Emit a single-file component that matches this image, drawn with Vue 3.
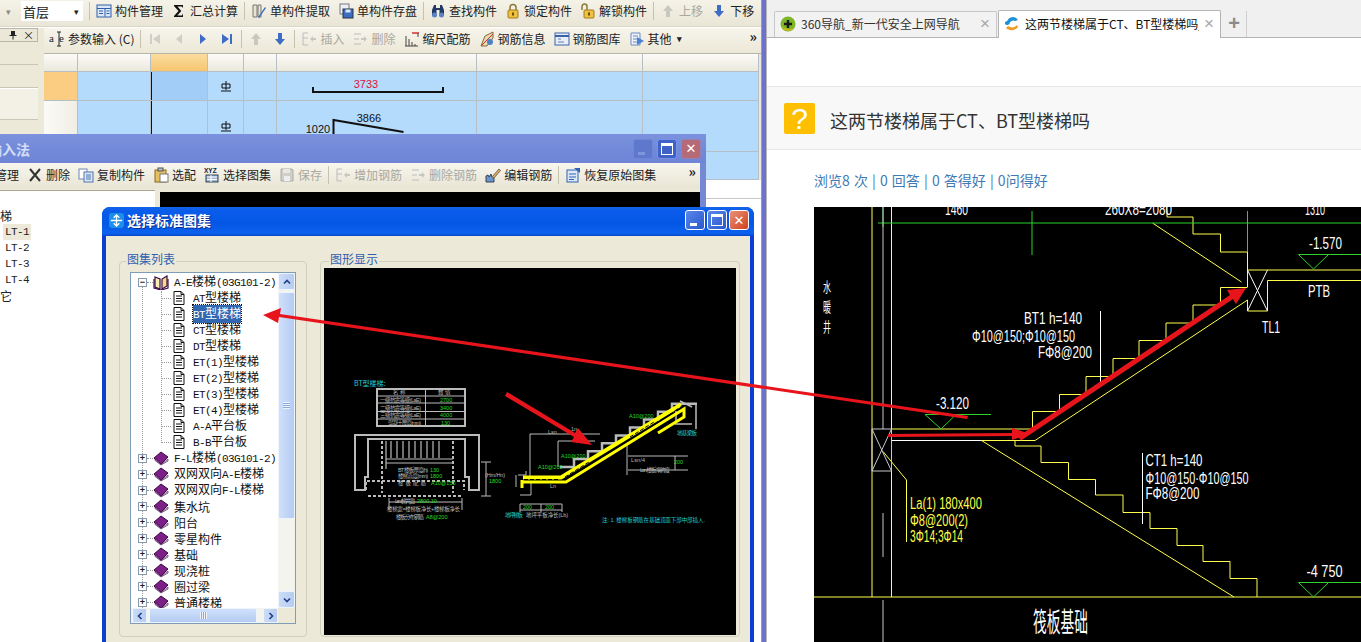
<template>
  <div class="screen">
    <!-- drawing software on the left half -->
    <div class="app">
      <div class="bar-main">
        <span class="tb-tail">▾</span>
        <div class="floor"><span>首层</span><i>▾</i></div>
        <span class="sep"></span>
        <template v-for="(t, i) in mainTools" :key="i">
          <span v-if="t.sep" class="sep"></span>
          <span v-else class="tool" :class="{ off: t.off }"><svg viewBox="0 0 16 16" width="16" height="16" v-html="icons[t.icon]"></svg>{{ t.label }}</span>
        </template>
      </div>

      <div class="app-body">
        <div class="dock">
          <div class="dock-head">
            <svg viewBox="0 0 10 10" width="10" height="10"><path d="M3 1h4v4h1.500v1h-3v3.500h-1V6h-3V5H3z" fill="#222"/></svg>
            <span>×</span>
          </div>
          <div class="dock-row"></div>
          <div class="dock-row"></div>
          <div class="dock-row last"></div>
        </div>
        <div class="sheet">
          <div class="bar-sub">
            <template v-for="(t, i) in subTools" :key="i">
              <span v-if="t.sep" class="sep"></span>
              <span v-else class="tool" :class="{ off: t.off }"><svg viewBox="0 0 16 16" width="16" height="16" v-html="icons[t.icon]"></svg>{{ t.label }}<b v-if="t.caret" class="caret">▾</b></span>
            </template>
            <span class="more">»</span>
          </div>
          <div class="grid">
            <div v-for="n in 8" :key="'h' + n" class="cell head" :class="{ hot: n === 3 }"></div>

            <div class="cell rowhead hot"></div>
            <div class="cell blue"></div>
            <div class="cell blue sel cursor"></div>
            <div class="cell blue mark"><svg viewBox="0 0 12 12" width="12" height="12" v-html="icons.grade"></svg></div>
            <div class="cell blue"></div>
            <div class="cell blue shape">
              <svg width="200" height="29" viewBox="277 72 200 29">
                <text x="366" y="88" class="num red">3733</text>
                <path d="M313 87v5h130v-5" fill="none" stroke="#111" stroke-width="2" />
              </svg>
            </div>
            <div class="cell blue"></div>
            <div class="cell blue"></div>

            <div class="cell rowhead"></div>
            <div class="cell blue"></div>
            <div class="cell blue cursor"></div>
            <div class="cell blue mark"><svg viewBox="0 0 12 12" width="12" height="12" v-html="icons.grade"></svg></div>
            <div class="cell blue"></div>
            <div class="cell blue shape">
              <svg width="200" height="50" viewBox="277 101 200 50">
                <text x="369" y="122" class="num">3866</text>
                <text x="318" y="133" class="num">1020</text>
                <path d="M333.500 134v-14l70 12" fill="none" stroke="#111" stroke-width="2" />
              </svg>
            </div>
            <div class="cell blue"></div>
            <div class="cell blue"></div>

            <div class="cell rowhead"></div>
            <div v-for="n in 7" :key="'r' + n" class="cell blue"></div>
          </div>
        </div>
      </div>

      <!-- inactive window behind -->
      <div class="win win-back">
        <div class="caption">
          <span class="cap-title">输入法</span>
          <div class="cap-btns">
            <span class="cap-btn dim"><u></u></span>
            <span class="cap-btn"><em></em></span>
            <span class="cap-btn close dull">✕</span>
          </div>
        </div>
        <div class="win-inner">
          <div class="bar-win">
            <template v-for="(t, i) in winTools" :key="i">
              <span v-if="t.sep" class="sep"></span>
              <span v-else class="tool" :class="{ off: t.off }"><svg v-if="t.icon" viewBox="0 0 16 16" width="16" height="16" v-html="icons[t.icon]"></svg>{{ t.label }}</span>
            </template>
            <span class="more">»</span>
          </div>
          <div class="win-main">
            <div class="back-tree">
              <div class="back-line">梯</div>
              <div class="back-line lt picked">LT-1</div>
              <div class="back-line lt">LT-2</div>
              <div class="back-line lt">LT-3</div>
              <div class="back-line lt">LT-4</div>
              <div class="back-line">它</div>
            </div>
            <div class="back-view"></div>
          </div>
        </div>
      </div>

      <!-- active dialog -->
      <div class="win win-front">
        <div class="caption">
          <span class="cap-icon"><svg viewBox="0 0 16 16" width="15" height="15"><path d="M8 2v12M2 8h12M5 5l3-3 3 3M5 11l3 3 3-3" fill="none" stroke="#fff" stroke-width="1.500"/></svg></span>
          <span class="cap-title">选择标准图集</span>
          <div class="cap-btns">
            <span class="cap-btn"><u></u></span>
            <span class="cap-btn"><em></em></span>
            <span class="cap-btn close">✕</span>
          </div>
        </div>
        <div class="dlg-body">
          <fieldset class="group tree-group">
            <span class="legend">图集列表</span>
            <div class="listbox">
              <div class="list-top">
                <div class="tree">
                  <span class="guide guide-root"></span>
                  <span class="guide guide-leaf"></span>
                  <div v-for="(r, i) in treeRows" :key="i" class="row" :class="r.type">
                    <template v-if="r.type !== 'leaf'">
                      <span class="expander">{{ r.type === 'open' ? '−' : '+' }}</span>
                      <span class="dots"></span>
                      <svg viewBox="0 0 16 16" width="16" height="16" v-html="r.type === 'open' ? icons.bookOpen : icons.book"></svg>
                    </template>
                    <template v-else>
                      <span class="dots leafdots"></span>
                      <svg viewBox="0 0 16 16" width="16" height="16" v-html="icons.doc"></svg>
                    </template>
                    <span class="name" :class="{ chosen: r.chosen }"><span v-for="(p, j) in splitRuns(r.label)" :key="j" :class="{ latin: p.latin }">{{ p.text }}</span></span>
                  </div>
                </div>
                <div class="vscroll">
                  <span class="sb-btn"><svg viewBox="0 0 10 10" width="10" height="10"><path d="M2 6.500l3-3 3 3" class="chev"/></svg></span>
                  <span class="sb-thumb"><i></i></span>
                  <span class="sb-btn low"><svg viewBox="0 0 10 10" width="10" height="10"><path d="M2 3.500l3 3 3-3" class="chev"/></svg></span>
                </div>
              </div>
              <div class="hscroll">
                <span class="sb-btn"><svg viewBox="0 0 10 10" width="10" height="10"><path d="M6.500 2l-3 3 3 3" class="chev"/></svg></span>
                <span class="sb-thumb"><i></i></span>
                <span class="sb-btn"><svg viewBox="0 0 10 10" width="10" height="10"><path d="M3.500 2l3 3-3 3" class="chev"/></svg></span>
                <span class="sb-end"></span>
              </div>
            </div>
          </fieldset>

          <fieldset class="group view-group">
            <span class="legend">图形显示</span>
            <svg class="preview" viewBox="324 268 412 367" width="412" height="367">
              <rect x="324" y="268" width="412" height="367" fill="#000" />
              <text x="354" y="386" class="t7 cy">BT型楼梯:</text>
              <g fill="none" stroke="#bbb">
                <rect x="377" y="389" width="88" height="37" stroke-width="2" />
                <path d="M378 396h86M378 403h86M378 411.500h86M378 419h86M425.500 389v37" />
                <path d="M355 490v-55h124v55h-10v-13h-4v-38h-97v38h-3v13z" stroke-width="2" />
                <path d="M366 490v-9h98v9M368 496h93M382 441v52M453 441v52" stroke-dasharray="3 2" stroke-width="2" />
                <path d="M386 441v28M391 441v17M397 441v17M403 441v17M409 441v17M415 441v17M421 441v17M427 441v17M433 441v17M439 441v17M386 459h67M386 463h67" stroke-width="1.200" />
                <path d="M486 462v34M481 462h10M481 496h10M389 502h73M389 498v12M462 498v12" />
                <path :d="stairPreview" stroke-width="2.500" />
                <path d="M518 475h8v-4M516 475v12M520 495h11v-14M530 434h70M530 434v44M558 441h37M558 441v26" stroke-width="1" />
                <path d="M628 456h60M628 470h60M627 445v30M675 456v14" />
                <path d="M696 405v24M692 424h-17M676 421v-10M680 401l12 6" stroke-width="1.500" />
                <path d="M520 504h42M520 510h42M520 504v8M541 504v8M562 504v8" />
              </g>
              <g fill="none" stroke="#ff0">
                <path d="M523 477.500h38l120-73" stroke-width="4" />
                <path d="M522 482h44l118-73v8l-26 16" stroke-width="3" />
                <path d="M522 480v8" stroke-width="3" />
              </g>
              <path d="M524 479.500h36M565 477l24-15M630 437l24-15M660 421l22-15" fill="none" stroke="#000" stroke-dasharray="4 2" />
              <g class="t6 gy">
                <text x="393" y="394">名 称</text><text x="438" y="394">数 值</text>
                <text x="380" y="402" textLength="41">一级抗震等级(LaE)</text>
                <text x="380" y="410" textLength="41">二级抗震等级(LaE)</text>
                <text x="380" y="417" textLength="41">三级抗震等级(LaE)</text>
                <text x="388" y="425" textLength="33">混凝土厚度(mm)</text>
                <text x="398" y="472" textLength="30">BT 楼板厚度(h)</text>
                <text x="398" y="478" textLength="30">楼梯高度(mm)</text>
                <text x="398" y="485" textLength="28">楼板配筋</text>
                <text x="395" y="503" textLength="20">Lsm(梯井宽)</text>
                <text x="387" y="511" textLength="73">楼梯宽=楼梯板净长+楼梯板净长</text>
                <text x="396" y="519" textLength="28">楼板分布钢筋</text>
                <text x="485" y="477" textLength="20">(Hm/Hn)</text>
                <text x="631" y="462" textLength="14">Lsn/4</text>
                <text x="640" y="472" textLength="30">Lsn:楼板净跨度</text>
                <text x="526" y="517" textLength="42">地坪平板净长(Lb)</text>
                <text x="571" y="431">1n</text>
                <text x="548" y="434">Lsn</text>
                <text x="550" y="488">Ln</text>
              </g>
              <g class="t6 gr">
                <text x="440" y="402">2700</text><text x="440" y="410">3400</text><text x="440" y="417">4000</text>
                <text x="441" y="425">130</text>
                <text x="430" y="472">130</text><text x="430" y="478">1800</text><text x="431" y="485">A10@150</text>
                <text x="489" y="483">1800</text>
                <text x="417" y="503">2800 10</text>
                <text x="426" y="519">A8@200</text>
                <text x="538" y="469">A10@200</text>
                <text x="561" y="458">A10@200</text>
                <text x="629" y="418">A10@200</text>
                <text x="523" y="509">200</text><text x="545" y="509">200</text>
                <text x="674" y="464">200</text>
              </g>
              <g class="t6 cy">
                <text x="677" y="435" textLength="20">地基梁板</text>
                <text x="505" y="517" textLength="18">地坪梯板</text>
                <text x="602" y="522" textLength="103">注: 1. 楼梯板钢筋在基础顶面下部中部插入.</text>
              </g>
            </svg>
          </fieldset>
        </div>
      </div>
    </div>

    <div class="divider"></div>

    <!-- browser on the right half -->
    <div class="browser">
      <div class="tabs">
        <div class="tab">
          <svg viewBox="0 0 16 16" width="16" height="16"><circle cx="8" cy="8" r="7.500" fill="#7cb526"/><path d="M2 10a7 7 0 0 0 12 2 9 9 0 0 1-12-2z" fill="#f2b705"/><path d="M8 4v8M4 8h8" stroke="#1a1a1a" stroke-width="2.400"/></svg>
          <span class="tab-title">360导航_新一代安全上网导航</span>
          <span class="tab-x">×</span>
        </div>
        <div class="tab active">
          <svg viewBox="0 0 16 16" width="16" height="16"><path d="M3 6a6 6 0 0 1 11-2l-3 1a3.500 3.500 0 0 0-5 1.500z" fill="#1f8fd8"/><path d="M1 8a2 2 0 0 1 5-1 3 3 0 0 1-5 1z" fill="#1f8fd8"/><path d="M2 12c3 3 9 3 12-1l-1-2c-2 3-6 3-9 1z" fill="#f29a1f"/></svg>
          <span class="tab-title">这两节楼梯属于CT、BT型楼梯吗_</span>
          <span class="tab-x">×</span>
        </div>
        <span class="tab-new">+</span>
      </div>
      <div class="page-gap"></div>
      <div class="q-band">
        <span class="q-mark">?</span>
        <span class="q-title">这两节楼梯属于CT、BT型楼梯吗</span>
      </div>
      <div class="q-stats">浏览8 次 | 0 回答 | 0 答得好 | 0问得好</div>
      <svg class="cad" viewBox="814 207 547 435" width="547" height="435">
        <rect x="814" y="207" width="547" height="435" fill="#000" />
        <g fill="none" stroke="#ffff4d">
          <path d="M872 207v390M891.500 207v390M814 597h547" />
          <path d="M1167 207v10h26v17h27.500v18h27v35" />
          <path d="M1152.500 223l89 59" />
          <path d="M1247.500 270h113.500M1267.500 280.500h93.500M1267.500 280.500v30.500h-20v-11" />
          <path d="M891.500 429h141v-17.500h27v-17h26.500v-18h27v-18h26v-18h27v-17.500h27v-18h27.500v-17.500h27" />
          <path d="M891.500 440.500h143.500l212.500-140.500" />
          <path d="M1015 440.500v5.500h26v16.500h27.500v17h27v15.500h27.500v17.500h27v16h27v17h26v16h27v17h27v18.500" />
          <path d="M981.500 440.500l252.500 156.500" />
          <path d="M883 451.500l23.500 28.500v62" />
        </g>
        <g fill="none" stroke="#2bd42b">
          <path d="M878 223h483M883 207v20M1032 211v44M1247.500 211v41" />
          <path d="M925 414.500h66M925 414.500l16 14.500 15-14.500" />
          <path d="M1298.500 254.500h62.500M1298.500 254.500l15 14.500 15-14.500" />
          <path d="M1298.500 582.500h62.500M1298.500 582.500l15 14.500 15-14.500" />
        </g>
        <g fill="none" stroke="#c8c8c8">
          <path d="M883 207v222M883 513v44M883 600v42" />
          <path d="M872 429h19.500v42h-19.500zM872 429l19.500 42M891.500 429l-19.500 42" />
        </g>
        <g fill="none" stroke="#fff">
          <path d="M1247.500 270l20 41M1267.500 270l-20 41" />
          <path d="M1100.500 311v71M1142.500 453v71M891.500 440.500h90" />
        </g>
        <g class="cad-text white">
          <text x="1024" y="324" textLength="58" lengthAdjust="spacingAndGlyphs">BT1 h=140</text>
          <text x="972" y="342" textLength="103" lengthAdjust="spacingAndGlyphs">Φ10@150;Φ10@150</text>
          <text x="1038" y="358" textLength="54" lengthAdjust="spacingAndGlyphs">FΦ8@200</text>
          <text x="1145.500" y="466" textLength="57" lengthAdjust="spacingAndGlyphs">CT1 h=140</text>
          <text x="1145.500" y="484" textLength="103" lengthAdjust="spacingAndGlyphs">Φ10@150·Φ10@150</text>
          <text x="1145.500" y="499" textLength="54" lengthAdjust="spacingAndGlyphs">FΦ8@200</text>
          <text x="936" y="409" textLength="33" lengthAdjust="spacingAndGlyphs">-3.120</text>
          <text x="1309" y="249" textLength="33" lengthAdjust="spacingAndGlyphs">-1.570</text>
          <text x="1306.500" y="577" textLength="36" lengthAdjust="spacingAndGlyphs">-4 750</text>
          <text x="1308" y="297" textLength="22" lengthAdjust="spacingAndGlyphs">PTB</text>
          <text x="1262" y="333" textLength="18" lengthAdjust="spacingAndGlyphs">TL1</text>
          <text x="945" y="215" textLength="23" lengthAdjust="spacingAndGlyphs">1460</text>
          <text x="1105" y="215" textLength="67" lengthAdjust="spacingAndGlyphs">260X8=2080</text>
          <text x="1305" y="215" textLength="20" lengthAdjust="spacingAndGlyphs">1310</text>
        </g>
        <g class="cad-text yellow">
          <text x="910" y="509" textLength="72" lengthAdjust="spacingAndGlyphs">La(1) 180x400</text>
          <text x="910" y="526" textLength="58" lengthAdjust="spacingAndGlyphs">Φ8@200(2)</text>
          <text x="910" y="542" textLength="53" lengthAdjust="spacingAndGlyphs">3Φ14;3Φ14</text>
        </g>
        <g class="cad-cn">
          <text x="823" y="292" textLength="8" lengthAdjust="spacingAndGlyphs">水</text>
          <text x="823" y="312" textLength="8" lengthAdjust="spacingAndGlyphs">暖</text>
          <text x="823" y="332" textLength="8" lengthAdjust="spacingAndGlyphs">井</text>
          <text class="big" x="1033" y="632" textLength="55" lengthAdjust="spacingAndGlyphs">筏板基础</text>
        </g>
      </svg>
    </div>

    <!-- annotation arrows across both windows -->
    <svg class="arrows" viewBox="0 0 1361 642" width="1361" height="642">
      <g fill="#e8141c" stroke="none">
        <path d="M263 315l18-7-1 6 688 102-1 3-688-102-1 6z" />
        <path d="M888 434l124-1v-5l18 6-18 6v-4l-124 1z" />
        <path d="M1018 436.500l212-141.500-3-5 19-2-10 16-3-5-212 141.500z" />
        <path d="M505 396l2-4 68 41 3-5 14 17-21-3 3-5z" />
      </g>
    </svg>
  </div>
</template>

<script setup>
const icons = {
  grid: '<rect x="1" y="2" width="14" height="12" fill="#dbe8f8" stroke="#2f5fa8"/><path d="M1 5.500h14M9 5.500v8M3 8h4M3 10.500h4M10.500 8h3M10.500 10.500h3" stroke="#2f5fa8"/>',
  sigma: '<path d="M3 2h9v3l-1.200-1.500H6.500l3.800 4.500-4 4.500h4.700l1-2v3.500H3v-1l4.500-5L3 3z" fill="#111"/>',
  extract: '<path d="M2 2h4v12H2zM7 2h3v12H7z" fill="#e8e4d0" stroke="#777"/><path d="M7 14l7-10 1 1-7 10z" fill="#3a6fc0"/>',
  disk: '<rect x="2" y="1" width="9" height="10" fill="#eef0f4" stroke="#778"/><rect x="5" y="6" width="10" height="9" fill="#3d6cc0" stroke="#234"/><rect x="7.500" y="6.500" width="5" height="3" fill="#dfe8f8"/>',
  find: '<path d="M2 7l2-5h2v3h4V2h2l2 5v6H9.500V7h-3v6H2z" fill="#223a66"/><circle cx="4.500" cy="12" r="2.500" fill="#5b83c4"/><circle cx="11.500" cy="12" r="2.500" fill="#5b83c4"/>',
  lock: '<path d="M5 7V4.500a3 3 0 0 1 6 0V7" fill="none" stroke="#8a7a3a" stroke-width="1.500"/><rect x="3" y="7" width="10" height="8" rx="1" fill="#f0c040" stroke="#a07a18"/><rect x="7" y="9.500" width="2" height="3" fill="#6b4d05"/>',
  unlock: '<path d="M2 7V3.500a2.500 2.500 0 0 1 5 0V7" fill="none" stroke="#8a7a3a" stroke-width="1.500"/><rect x="4" y="7" width="10" height="8" rx="1" fill="#f0c040" stroke="#a07a18"/><rect x="8" y="9.500" width="2" height="3" fill="#6b4d05"/>',
  up: '<path d="M8 2l5 6h-3v6H6V8H3z" fill="#c8c8c0"/>',
  down: '<path d="M8 14l5-6h-3V2H6v6H3z" fill="#3f6dc4"/>',
  text: '<path d="M8 1h4M10 1v14M8 15h4" stroke="#222" fill="none"/><text x="0" y="11" font-size="11" font-family="Liberation Serif" fill="#222">a</text><text x="10" y="11" font-size="11" font-family="Liberation Serif" fill="#222">e</text>',
  first: '<path d="M3 3h2v10H3zM13 3v10L6 8z" fill="#cfcfc8"/>',
  prev: '<path d="M11 3v10L5 8z" fill="#cfcfc8"/>',
  next: '<path d="M5 3v10l6-5z" fill="#3f6dc4"/>',
  last: '<path d="M3 3v10l7-5zM11 3h2v10h-2z" fill="#3f6dc4"/>',
  insert: '<path d="M2 2h5M2 2v12M2 14h5M2 7h5" stroke="#bbb" fill="none"/><path d="M9 8l3-3v2h3v2h-3v2z" fill="#c8c8c0"/>',
  remove: '<path d="M2 3h7M2 8h5M2 13h7" stroke="#bbb" fill="none"/><path d="M15 8l-3-3v2H9v2h3v2z" fill="#c8c8c0"/>',
  scale: '<path d="M2 15V5M5 15V8M8 15v-4M11 15v-2M14 15h-13" stroke="#444" fill="none"/><path d="M8 2h7" stroke="#c33" stroke-width="1.500"/><path d="M14 2v4" stroke="#444"/>',
  info: '<path d="M2 15l4-10 8-4v6l-6 8z" fill="#e8d9b0" stroke="#8a6a3a"/><path d="M2 15l12-12" stroke="#c33"/><circle cx="11" cy="11" r="3" fill="#4a83c8"/>',
  library: '<rect x="1" y="2" width="14" height="12" fill="#e9eef8" stroke="#3a62a8"/><path d="M1 5h14" stroke="#3a62a8" stroke-width="2"/><path d="M4 8h3M4 11h6" stroke="#6080b0"/>',
  other: '<path d="M2 2h9v12H2z" fill="#eef2fb" stroke="#6c8ac0"/><path d="M4 5h5M4 8h4M4 11h4" stroke="#6c8ac0"/><path d="M8 6l7 4-7 4z" fill="#4d82d2"/>',
  cross: '<path d="M3 2l10 12M13 2L3 14" stroke="#333" stroke-width="2"/>',
  copy: '<rect x="1" y="2" width="8" height="10" fill="#fff" stroke="#6c87b8"/><rect x="6" y="5" width="9" height="10" fill="#dce7f8" stroke="#4f74b0"/><path d="M8 8h5M8 10h5M8 12h5" stroke="#4f74b0"/>',
  match: '<rect x="2" y="3" width="11" height="12" fill="#e5c060" stroke="#8a6a20"/><rect x="5" y="1" width="5" height="3" fill="#bbb" stroke="#555"/><rect x="7" y="7" width="8" height="8" fill="#fff" stroke="#777"/>',
  atlas: '<text x="0" y="6" font-size="6.500" font-family="Liberation Sans" font-weight="700" fill="#124">XYZ</text><rect x="2" y="8" width="12" height="7" fill="#9fb4d4" stroke="#345"/><path d="M3 10h10M3 12.500h10M7 8v7" stroke="#fff"/>',
  save: '<path d="M2 2h11l1 1v11H2z" fill="#cfcfc8" stroke="#aaa"/><rect x="5" y="9" width="6" height="5" fill="#eee"/><rect x="4" y="2" width="7" height="4" fill="#e8e8e0"/>',
  edit: '<path d="M1 15V9l2-1 1 2 2-3 1 3 2-2v7z" fill="#6c93cc" stroke="#345"/><path d="M7 10L14 2l1.500 1.500L9 11z" fill="#e0b060" stroke="#765"/>',
  restore: '<rect x="2" y="3" width="11" height="12" fill="#dce7f8" stroke="#2f62b0"/><path d="M4 7h7M4 10h7M4 12.500h5" stroke="#2f62b0"/><path d="M9 1h6v5z" fill="#2f62b0"/>',
  grade: '<path d="M2 4h8v4H2zM6 1v9M1 11h10" fill="none" stroke="#111"/>',
  book: '<path d="M1 8l7-6 7 5-7 7z" fill="#7c1f86" stroke="#3c0b46"/><path d="M2 9l6 5.500L15 9v2l-7 4-6-4.500z" fill="#d9c8dc" stroke="#3c0b46" stroke-width=".6"/>',
  bookOpen: '<path d="M2 3l5 2v10l-5-2z" fill="#f8eeb4" stroke="#3c0b46" stroke-width="1.200"/><path d="M14 2l-5 3v10l5-3z" fill="#f3dd8c" stroke="#3c0b46" stroke-width="1.200"/><path d="M1 5v9l7 2 7-2V5" fill="none" stroke="#3c0b46" stroke-width="1.200"/>',
  doc: '<path d="M3 1.500h7l3 3v10H3z" fill="#fff" stroke="#111"/><path d="M5 6h6M5 8.500h6M5 11h6M10 1.500v3h3" fill="none" stroke="#111"/>'
}

const mainTools = [
  { icon: 'grid', label: '构件管理' },
  { icon: 'sigma', label: '汇总计算' },
  { sep: true },
  { icon: 'extract', label: '单构件提取' },
  { icon: 'disk', label: '单构件存盘' },
  { sep: true },
  { icon: 'find', label: '查找构件' },
  { icon: 'lock', label: '锁定构件' },
  { icon: 'unlock', label: '解锁构件' },
  { sep: true },
  { icon: 'up', label: '上移', off: true },
  { icon: 'down', label: '下移' }
]

const subTools = [
  { icon: 'text', label: '参数输入 (C)' },
  { sep: true },
  { icon: 'first' },
  { icon: 'prev' },
  { icon: 'next' },
  { icon: 'last' },
  { sep: true },
  { icon: 'up' },
  { icon: 'down' },
  { sep: true },
  { icon: 'insert', label: '插入', off: true },
  { icon: 'remove', label: '删除', off: true },
  { icon: 'scale', label: '缩尺配筋' },
  { icon: 'info', label: '钢筋信息' },
  { icon: 'library', label: '钢筋图库' },
  { icon: 'other', label: '其他', caret: true }
]

const winTools = [
  { label: '管理' },
  { icon: 'cross', label: '删除' },
  { icon: 'copy', label: '复制构件' },
  { icon: 'match', label: '选配' },
  { icon: 'atlas', label: '选择图集' },
  { icon: 'save', label: '保存', off: true },
  { sep: true },
  { icon: 'insert', label: '增加钢筋', off: true },
  { icon: 'remove', label: '删除钢筋', off: true },
  { icon: 'edit', label: '编辑钢筋' },
  { sep: true },
  { icon: 'restore', label: '恢复原始图集' }
]

const treeRows = [
  { type: 'open', label: 'A-E楼梯(03G101-2)' },
  { type: 'leaf', label: 'AT型楼梯' },
  { type: 'leaf', label: 'BT型楼梯', chosen: true },
  { type: 'leaf', label: 'CT型楼梯' },
  { type: 'leaf', label: 'DT型楼梯' },
  { type: 'leaf', label: 'ET(1)型楼梯' },
  { type: 'leaf', label: 'ET(2)型楼梯' },
  { type: 'leaf', label: 'ET(3)型楼梯' },
  { type: 'leaf', label: 'ET(4)型楼梯' },
  { type: 'leaf', label: 'A-A平台板' },
  { type: 'leaf', label: 'B-B平台板' },
  { type: 'book', label: 'F-L楼梯(03G101-2)' },
  { type: 'book', label: '双网双向A-E楼梯' },
  { type: 'book', label: '双网双向F-L楼梯' },
  { type: 'book', label: '集水坑' },
  { type: 'book', label: '阳台' },
  { type: 'book', label: '零星构件' },
  { type: 'book', label: '基础' },
  { type: 'book', label: '现浇桩' },
  { type: 'book', label: '圈过梁' },
  { type: 'book', label: '普通楼梯' }
]

// latin runs in the tree are narrower than the chinese ones
const splitRuns = (label) =>
  label.match(/[\x00-\x7f]+|[^\x00-\x7f]+/g).map((text) => ({
    text,
    latin: /^[\x00-\x7f]/.test(text)
  }))

const stairPreview = (() => {
  let x = 560
  let y = 467
  let d = `M${x} ${y}`
  for (let i = 0; i < 8; i++) {
    x += 14
    d += `H${x}`
    y -= 7.9
    d += `V${y}`
  }
  return d + 'H697'
})()
</script>

<style scoped>
.screen {
  position: relative;
  display: flex;
  width: 1361px;
  height: 642px;
  overflow: hidden;
  background: #fff;
  font-family: "Noto Sans CJK SC", "Liberation Sans", sans-serif;
  font-size: 12px;
  color: #222;
}

/* left application */
.app {
  position: relative;
  width: 761px;
  flex: none;
  overflow: hidden;
  background: #fff;
}

.tool {
  display: inline-flex;
  align-items: center;
  gap: 3px;
  line-height: 16px;
  white-space: nowrap;
}

.tool svg {
  flex: none;
}

.tool.off {
  color: #aaa8a0;
}

.sep {
  width: 1px;
  height: 18px;
  margin: 0 -2px;
  background: #c5c2b0;
  flex: none;
}

.bar-main {
  display: flex;
  align-items: center;
  gap: 8px;
  height: 22px;
  padding: 0 0 4px 6px;
  background: linear-gradient(#f5f3e8, #e9e6d6);
  border-bottom: 1px solid #d8d5c4;
}

.tb-tail {
  width: 8px;
  color: #888;
  font-size: 9px;
}

.floor {
  display: flex;
  align-items: center;
  justify-content: space-between;
  width: 56px;
  height: 20px;
  margin-left: -1px;
  padding: 0 4px 0 2px;
  background: #fff;
  font-size: 13px;
}

.floor i {
  font-style: normal;
  font-size: 9px;
}

.app-body {
  display: flex;
  height: 170px;
  padding-top: 1px;
  background: #fff;
  border-bottom: 1px solid #c8c8c8;
}

.dock {
  width: 38px;
  flex: none;
  background: #ece9d8;
}

.dock-head {
  display: flex;
  align-items: center;
  justify-content: space-between;
  height: 12px;
  padding: 0 3px 0 8px;
  border: 1px solid #b8b6a8;
  border-left: 0;
  background: #ebe8da;
  font-size: 11px;
}

.dock-row {
  height: 22px;
  border-bottom: 1px solid #c9c6b6;
  background: #ece9d8;
}

.dock-row.last {
  height: 30px;
  background: #f3f1e6;
  border-top: 1px solid #fff;
}

.sheet {
  flex: 1;
  padding-left: 6px;
  background: linear-gradient(#ece9d8 0 152px, #fff 152px);
}

.bar-sub {
  display: flex;
  align-items: center;
  gap: 8px;
  position: relative;
  height: 22px;
  padding: 0 0 3px 5px;
  background: linear-gradient(#f7f5ec, #ebe8d8);
  border-bottom: 1px solid #b7b5a6;
}

.more {
  position: absolute;
  top: -1px;
  right: 4px;
  font-size: 14px;
  font-weight: 700;
  line-height: 18px;
  color: #222;
}

.caret {
  margin-left: 2px;
  font-size: 9px;
}

.grid {
  display: grid;
  grid-template-columns: 34px 73px 57px 36px 33px 200px 166px 116px;
  grid-template-rows: 18px 29px 51px 28px;
}

.cell {
  position: relative;
  border-right: 1px solid #b6bec6;
  border-bottom: 1px solid #b6bec6;
  overflow: hidden;
}

.head {
  background: linear-gradient(#fcfbf8, #ebe8dc);
}

.head.hot {
  background: linear-gradient(#fbdc9e, #f5c670);
}

.rowhead {
  background: linear-gradient(90deg, #fbfaf6, #f0eee4);
}

.rowhead.hot {
  background: #fbcd82;
}

.blue {
  background: #b4dafc;
}

.blue.sel {
  background: #a2cdf6;
}

.cursor::before {
  content: "";
  position: absolute;
  top: 0;
  bottom: 0;
  left: 0;
  width: 1px;
  background: #111;
}

.mark {
  display: flex;
  align-items: center;
  justify-content: center;
}

.shape svg {
  display: block;
}

.num {
  font-family: "Liberation Sans", sans-serif;
  font-size: 11px;
  text-anchor: middle;
  fill: #111;
}

.num.red {
  fill: #e0103c;
}

/* windows */
.win {
  position: absolute;
  display: flex;
  flex-direction: column;
  border-radius: 7px 7px 0 0;
}

.caption {
  display: flex;
  align-items: center;
  flex: none;
  color: #fff;
}

.cap-btns {
  display: flex;
  margin-left: auto;
}

.cap-btn {
  position: relative;
  display: flex;
  align-items: center;
  justify-content: center;
  width: 20px;
  height: 20px;
  margin-left: 2px;
  border: 1px solid #fff;
  border-radius: 3px;
  box-sizing: border-box;
  background: linear-gradient(135deg, #5a86ea, #2a58cc);
  font-family: "DejaVu Sans", sans-serif;
  font-size: 13px;
  font-weight: 700;
  color: #fff;
}

.cap-btn.close {
  background: linear-gradient(135deg, #e8917a, #d2421f);
}

.cap-btn u {
  position: absolute;
  left: 4px;
  bottom: 3px;
  width: 7px;
  height: 3px;
  background: #fff;
}

.cap-btn em {
  width: 10px;
  height: 8px;
  border: 1px solid #fff;
  border-top-width: 3px;
}

.win-back {
  left: -100px;
  top: 134px;
  width: 806px;
  height: 520px;
  background: #7488d4;
}

.win-back .caption {
  height: 29px;
  padding: 0 5px 0 88px;
  background: linear-gradient(#7c92de, #7089d8 60%, #6f85d6);
}

.win-back .cap-title {
  font-size: 14px;
  font-weight: 700;
  color: #d4dcf6;
}

.win-back .cap-btn {
  border-color: #7a92e6;
  background: #3f62c8;
  margin-left: 4px;
}

.win-back .cap-btn.dim {
  background: #5e78cc;
  border-color: #6f87d8;
}

.win-back .cap-btn.dull {
  background: #b56a78;
  border-color: #9a80b0;
}

.win-back .cap-btn u {
  background: #7f95de;
}

.win-inner {
  flex: 1;
  margin-right: 6px;
  display: flex;
  flex-direction: column;
  background: #ece9d8;
}

.bar-win {
  position: relative;
  display: flex;
  align-items: center;
  gap: 8px;
  height: 24px;
  padding: 0 0 2px 95px;
  background: linear-gradient(#f8f6ee, #e8e5d4);
}

.win-main {
  flex: 1;
  display: flex;
  padding-top: 1px;
  gap: 5px;
}

.back-tree {
  width: 255px;
  flex: none;
  padding: 17px 0 0 100px;
  box-sizing: border-box;
  background: #fff;
  border-top: 1px solid #aca899;
}

.back-line {
  height: 16px;
  line-height: 16px;
}

.back-line.lt {
  width: 28px;
  margin-left: 3px;
  padding-left: 2px;
  box-sizing: border-box;
  font-family: "Liberation Mono", monospace;
  font-size: 11px;
  letter-spacing: -0.6px;
}

.back-line.picked {
  background: #ece9d8;
}

.back-view {
  flex: 1;
  margin-top: 2px;
  background: #000;
}

.win-front {
  left: 102px;
  top: 207px;
  width: 652px;
  height: 445px;
  background: #0a3fd0;
  border-radius: 8px 8px 0 0;
}

.win-front .caption {
  height: 29px;
  padding: 0 5px 3px 7px;
  box-sizing: border-box;
  background: linear-gradient(#1465e8, #0a5cec 12%, #0456e4 55%, #0b62ee 90%, #0747c8);
  border-radius: 8px 8px 0 0;
}

.cap-icon {
  display: flex;
  width: 15px;
  height: 15px;
  margin-right: 3px;
  border-radius: 3px;
  background: #1d8fe8;
}

.win-front .cap-title {
  font-size: 14px;
  font-weight: 700;
  text-shadow: 1px 1px 0 #0a2f90;
}

.dlg-body {
  flex: 1;
  display: flex;
  gap: 13px;
  margin: 0 4px;
  padding: 25px 0 0 13px;
  background: #ece9d8;
}

.group {
  position: relative;
  height: 376px;
  margin: 0;
  padding: 0;
  box-sizing: border-box;
  border: 1px solid #d0d0bf;
  border-radius: 4px;
  min-width: 0;
}

.legend {
  position: absolute;
  top: -10px;
  left: 6px;
  padding: 0 1px;
  background: #ece9d8;
  color: #2f5fb0;
  line-height: 14px;
}

.tree-group {
  width: 188px;
  padding: 10px 0 0 10px;
}

.view-group {
  width: 420px;
  padding: 6px 0 0 3px;
}

.view-group .legend {
  left: 8px;
}

.preview {
  display: block;
}

.listbox {
  width: 166px;
  height: 352px;
  box-sizing: border-box;
  border: 1px solid #7f9db9;
  background: #fff;
}

.list-top {
  display: flex;
  height: 335px;
}

.tree {
  position: relative;
  flex: 1;
  overflow: hidden;
  padding-top: 1px;
}

.guide {
  position: absolute;
  border-left: 1px dotted #999;
}

.guide-root {
  left: 11px;
  top: 12px;
  bottom: 0;
}

.guide-leaf {
  left: 30px;
  top: 18px;
  height: 152px;
}

.row {
  position: relative;
  display: flex;
  align-items: center;
  height: 16px;
  padding-left: 7px;
  white-space: nowrap;
}

.row.leaf {
  padding-left: 31px;
}

.expander {
  position: relative;
  z-index: 1;
  display: flex;
  flex: none;
  align-items: center;
  justify-content: center;
  width: 9px;
  height: 9px;
  box-sizing: border-box;
  border: 1px solid #8a9aa8;
  background: #fff;
  font-family: "Liberation Sans", sans-serif;
  font-size: 9px;
  line-height: 7px;
  font-weight: 700;
  color: #222;
}

.dots {
  width: 6px;
  flex: none;
  border-top: 1px dotted #999;
}

.leafdots {
  width: 9px;
}

.row svg {
  flex: none;
  margin-right: 5px;
}

.row.leaf svg {
  margin-right: 6px;
}

.name {
  display: inline-block;
  line-height: 15px;
  color: #111;
}

.name.chosen {
  background: #3166b0;
  color: #fff;
  outline: 1px dotted #111;
}

.latin {
  font-family: "Liberation Mono", monospace;
  font-size: 11px;
  letter-spacing: -0.6px;
}

.vscroll {
  display: flex;
  flex-direction: column;
  width: 17px;
  flex: none;
  background: #f4f4ee;
}

.hscroll {
  display: flex;
  height: 15px;
  background: #f4f4ee;
}

.sb-btn {
  display: flex;
  align-items: center;
  justify-content: center;
  flex: none;
  height: 17px;
  border-radius: 2px;
  background: linear-gradient(90deg, #cbdcf8, #b6ccf0);
  border: 1px solid #eef3fc;
  box-sizing: border-box;
  overflow: hidden;
}

.chev {
  fill: none;
  stroke: #1f3f86;
  stroke-width: 1.600;
}

.sb-btn.low {
  margin-top: auto;
}

.vscroll .sb-thumb {
  display: flex;
  align-items: center;
  justify-content: center;
  height: 227px;
  margin-top: 2px;
  border-radius: 2px;
  background: linear-gradient(90deg, #cfe0fa, #b4cbf2);
  border: 1px solid #eef3fc;
  box-sizing: border-box;
}

.sb-thumb i {
  width: 7px;
  height: 7px;
  background: repeating-linear-gradient(#eef3fc 0 1px, #8ea8d8 1px 2px);
}

.hscroll .sb-btn {
  width: 15px;
  height: 15px;
  margin-left: 1px;
}

.hscroll .sb-thumb {
  display: flex;
  align-items: center;
  justify-content: center;
  width: 108px;
  margin: 0 5px 0 2px;
  border-radius: 2px;
  background: linear-gradient(#cfe0fa, #b4cbf2);
  border: 1px solid #eef3fc;
  box-sizing: border-box;
}

.hscroll .sb-thumb i {
  background: repeating-linear-gradient(90deg, #eef3fc 0 1px, #8ea8d8 1px 2px);
}

.sb-end {
  flex: 1;
  background: #ece9d8;
}

/* divider between the two programs */
.divider {
  width: 5px;
  flex: none;
  background: linear-gradient(90deg, #9c9ca4 0 1px, #6d72cf 1px 100%);
}

/* browser */
.browser {
  flex: 1;
  min-width: 0;
  border-left: 1px solid #b5b5b5;
}

.tabs {
  display: flex;
  align-items: flex-end;
  height: 37px;
  padding-left: 7px;
  background: #f0f0f0;
  border-bottom: 1px solid #b4b4b4;
}

.tab {
  display: flex;
  align-items: center;
  gap: 5px;
  width: 223px;
  height: 26px;
  padding: 0 6px 2px 5px;
  margin-right: 1px;
  box-sizing: border-box;
  background: #f2f2f2;
  border: 1px solid #c8c8c8;
  border-bottom: 0;
  border-radius: 2px 2px 0 0;
}

.tab.active {
  height: 28px;
  margin-bottom: -1px;
  background: #fff;
  border-color: #b4b4b4;
}

.tab-title {
  flex: 1;
  overflow: hidden;
  white-space: nowrap;
  color: #333;
}

.tab.active .tab-title {
  color: #111;
}

.tab-x {
  font-family: "Liberation Sans", sans-serif;
  font-size: 17px;
  line-height: 16px;
  color: #a8a8a8;
}

.tab-new {
  width: 24px;
  height: 26px;
  border-right: 1px solid #cfcfcf;
  text-align: center;
  font-family: "Liberation Sans", sans-serif;
  font-size: 20px;
  line-height: 25px;
  font-weight: 700;
  color: #8a8a8a;
}

.page-gap {
  height: 48px;
}

.q-band {
  display: flex;
  align-items: center;
  gap: 15px;
  height: 62px;
  padding-left: 17px;
  background: #f8f8f8;
  border-top: 1px solid #e6e6e6;
  border-bottom: 1px solid #e6e6e6;
}

.q-mark {
  width: 31px;
  height: 31px;
  border-radius: 2px;
  background: #fdbf00;
  text-align: center;
  font-family: "Liberation Sans", sans-serif;
  font-size: 30px;
  line-height: 31px;
  color: #fff;
}

.q-title {
  margin-top: 3px;
  font-size: 18px;
  line-height: 26px;
  color: #333;
}

.q-stats {
  height: 57px;
  padding: 20px 0 0 47px;
  box-sizing: border-box;
  font-size: 14px;
  line-height: 20px;
  word-spacing: 1px;
  color: #3f7ab5;
}

.cad {
  display: block;
  margin-left: 47px;
}

.cad-text text {
  font-family: "Liberation Sans", sans-serif;
  font-size: 17px;
}

.white text {
  fill: #fff;
}

.cad-text.yellow text {
  font-size: 16px;
  fill: #ffff4d;
}

.cad-cn text {
  font-size: 14px;
  fill: #fff;
}

.cad-cn .big {
  font-size: 27px;
}

.t6 text {
  font-family: "Liberation Sans", "Noto Sans CJK SC", sans-serif;
  font-size: 5.500px;
}

.t7 {
  font-size: 7px;
}

.gy text {
  fill: #bbb;
}

.gr text {
  fill: #22dd22;
}

.cy text,
.cy {
  fill: #22cccc;
}

.arrows {
  position: absolute;
  left: 0;
  top: 0;
  pointer-events: none;
}
</style>
